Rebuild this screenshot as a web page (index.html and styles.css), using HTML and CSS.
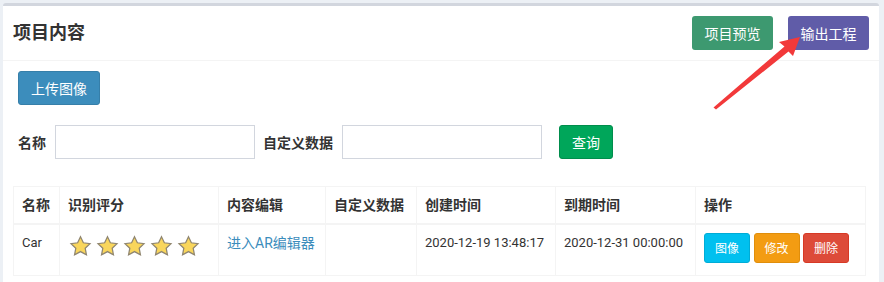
FILE: index.html
```html
<!DOCTYPE html>
<html lang="zh-CN">
<head>
    <meta charset="UTF-8">
    <title>项目内容</title>
    <link rel="stylesheet" href="styles.css">
</head>
<body>
    <div class="box">
        <div class="box-header">
            <h3 class="box-title">项目内容</h3>
            <div class="box-tools">
                <button class="btn btn-olive">项目预览</button>
                <button class="btn btn-purple">输出工程</button>
            </div>
        </div>
        <div class="box-body">
            <div class="toolbar">
                <button class="btn btn-primary">上传图像</button>
                <form class="search-form">
                    <label>名称</label>
                    <input type="text" class="form-control">
                    <label>自定义数据</label>
                    <input type="text" class="form-control">
                    <button type="button" class="btn btn-success">查询</button>
                </form>
            </div>
            <table class="table">
                <colgroup>
                    <col style="width: 46px">
                    <col style="width: 159px">
                    <col style="width: 107px">
                    <col style="width: 91px">
                    <col style="width: 139px">
                    <col style="width: 140px">
                    <col>
                </colgroup>
                <thead>
                    <tr>
                        <th>名称</th>
                        <th>识别评分</th>
                        <th>内容编辑</th>
                        <th>自定义数据</th>
                        <th>创建时间</th>
                        <th>到期时间</th>
                        <th>操作</th>
                    </tr>
                </thead>
                <tbody>
                    <tr>
                        <td class="latin">Car</td>
                        <td>
                            <div class="stars">
                                <svg class="star" viewBox="0 0 24 24"><path d="M12 1.8l3 6.3 6.9.9-5 4.8 1.3 6.9L12 17.3l-6.2 3.4 1.3-6.9-5-4.8 6.9-.9z"/></svg>
                                <svg class="star" viewBox="0 0 24 24"><path d="M12 1.8l3 6.3 6.9.9-5 4.8 1.3 6.9L12 17.3l-6.2 3.4 1.3-6.9-5-4.8 6.9-.9z"/></svg>
                                <svg class="star" viewBox="0 0 24 24"><path d="M12 1.8l3 6.3 6.9.9-5 4.8 1.3 6.9L12 17.3l-6.2 3.4 1.3-6.9-5-4.8 6.9-.9z"/></svg>
                                <svg class="star" viewBox="0 0 24 24"><path d="M12 1.8l3 6.3 6.9.9-5 4.8 1.3 6.9L12 17.3l-6.2 3.4 1.3-6.9-5-4.8 6.9-.9z"/></svg>
                                <svg class="star" viewBox="0 0 24 24"><path d="M12 1.8l3 6.3 6.9.9-5 4.8 1.3 6.9L12 17.3l-6.2 3.4 1.3-6.9-5-4.8 6.9-.9z"/></svg>
                            </div>
                        </td>
                        <td><a href="#" class="link">进入AR编辑器</a></td>
                        <td></td>
                        <td class="latin">2020-12-19 13:48:17</td>
                        <td class="latin">2020-12-31 00:00:00</td>
                        <td class="actions">
                            <button class="btn btn-sm btn-info">图像</button>
                            <button class="btn btn-sm btn-warning">修改</button>
                            <button class="btn btn-sm btn-danger">删除</button>
                        </td>
                    </tr>
                </tbody>
            </table>
        </div>
    </div>

    <!-- annotation arrow pointing at the export button -->
    <svg class="arrow" width="884" height="282" viewBox="0 0 884 282">
        <polygon points="713.5,107.5 784.5,46.5 779,42 800,37 793,56 788.5,51.5 716,109.5" fill="#f2393a"/>
    </svg>
</body>
</html>
```

FILE: styles.css
```css
body {
    margin: 0;
    padding: 3px 5px 0 3px;
    background: #ecf0f5;
    font-family: Roboto, "Noto Sans CJK SC", sans-serif;
    font-size: 14px;
    color: #333;
}

.box {
    background: #fff;
    border-top: 3px solid #d2d6de;
    border-radius: 3px;
}

.box-header {
    display: flex;
    justify-content: space-between;
    align-items: center;
    padding: 10px;
    border-bottom: 1px solid #f4f4f4;
}

.box-title {
    margin: 0;
    font-size: 18px;
    font-weight: 700;
    line-height: 1;
    color: #333;
}

.box-tools {
    display: flex;
    gap: 15px;
}

.box-body {
    padding: 10px 10px 20px;
}

.toolbar {
    padding: 0 5px;
}

.btn {
    display: inline-block;
    height: 34px;
    padding: 6px 12px;
    font-family: "Noto Sans CJK SC", sans-serif;
    font-size: 14px;
    line-height: 20px;
    color: #fff;
    border: 1px solid transparent;
    border-radius: 3px;
    box-sizing: border-box;
    cursor: pointer;
}

.box-tools .btn {
    width: 81px;
    padding: 6px 0;
}

.btn-olive { background: #3d9970; }
.btn-purple { background: #605ca8; }
.btn-primary { background: #3c8dbc; border-color: #367fa9; }
.btn-success { background: #00a65a; border-color: #008d4c; }
.btn-info { background: #00c0ef; border-color: #00acd6; }
.btn-warning { background: #f39c12; border-color: #e08e0b; }
.btn-danger { background: #dd4b39; border-color: #d73925; }

.btn-sm {
    height: 30px;
    padding: 5px 10px;
    font-size: 12px;
    line-height: 18px;
}

.search-form {
    display: flex;
    align-items: center;
    margin: 20px 0 27px;
}

.search-form label {
    font-weight: 700;
    margin-right: 9px;
}

.form-control {
    width: 200px;
    height: 34px;
    box-sizing: border-box;
    border: 1px solid #d2d6de;
    margin-right: 8px;
    padding: 6px 12px;
}

.search-form .btn {
    margin-left: 9px;
}

.table {
    width: 853px;
    table-layout: fixed;
    border-collapse: collapse;
    border: 1px solid #f4f4f4;
}

.table th,
.table td {
    border: 1px solid #f4f4f4;
    padding: 8px;
    line-height: 20px;
    text-align: left;
    vertical-align: top;
}

.table th {
    font-weight: 700;
    border-bottom-width: 2px;
}

.latin {
    font-size: 13px;
}

.stars {
    display: flex;
    gap: 4px;
    height: 32px;
    margin: 2px 0 0 1px;
}

.star {
    width: 23px;
    height: 23px;
    fill: #f9d65c;
    stroke: #908670;
    stroke-width: 1.3;
}

.link {
    color: #3c8dbc;
    text-decoration: none;
}

.actions {
    white-space: nowrap;
}

.arrow {
    position: absolute;
    top: 0;
    left: 0;
    pointer-events: none;
}
```
